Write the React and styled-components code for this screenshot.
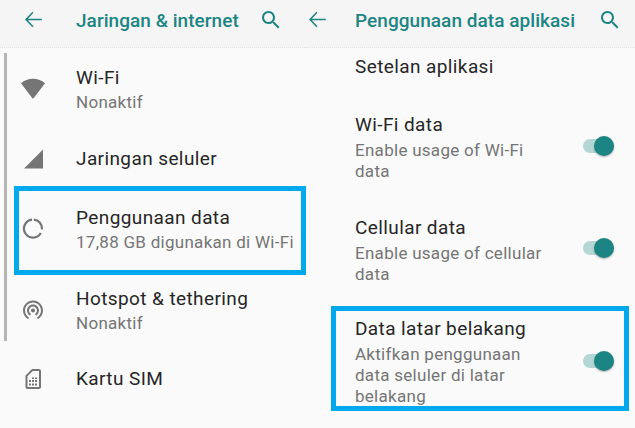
import React from "react";
import styled, { createGlobalStyle } from "styled-components";

const TEAL = "#1c8583";
const GREY = "#757575";

const GlobalStyle = createGlobalStyle`
  html, body {
    margin: 0;
    padding: 0;
    background: #fafafa;
  }
  * {
    box-sizing: border-box;
  }
`;

const ArrowIcon = () => (
  <TealIcon width="25" height="25" viewBox="0 0 24 24">
    <path d="M20 11.3H6.6l5.4-5.8-1-1L3.8 12l7.2 7.5 1-1-5.4-5.8H20z" />
  </TealIcon>
);

const SearchIcon = () => (
  <TealIcon width="24" height="24" viewBox="0 0 24 24">
    <path d="M15.5 14h-.79l-.28-.27C15.41 12.59 16 11.11 16 9.5 16 5.91 13.09 3 9.5 3S3 5.91 3 9.5 5.91 16 9.5 16c1.61 0 3.09-.59 4.23-1.57l.27.28v.79l5 4.99L20.49 19l-4.99-5zm-6 0C7.01 14 5 11.99 5 9.5S7.01 5 9.5 5 14 7.01 14 9.5 11.99 14 9.5 14z" />
  </TealIcon>
);

const WifiIcon = () => (
  <GreyIcon width="26" height="26" viewBox="0 0 26 26">
    <path d="M1 6.200C4.200 3.400 8.400 1.700 13 1.700s8.800 1.700 12 4.500L13.800 21a1 1 0 0 1-1.600 0z" />
  </GreyIcon>
);

const CellIcon = () => (
  <GreyIcon width="26" height="26" viewBox="-1 0 26 26">
    <path d="M3 22.500 22 3.500v19z" />
  </GreyIcon>
);

const DataUsageIcon = () => (
  <GreyIcon width="26" height="26" viewBox="0 1.500 26 26">
    <path
      d="M13.800 4.100a9 9 0 0 1 8.200 9.800M20.800 17.500A9 9 0 1 1 12 4.100"
      fill="none"
      stroke={GREY}
      strokeWidth="2.200"
    />
  </GreyIcon>
);

const HotspotIcon = () => (
  <GreyIcon width="24" height="24" viewBox="0 1.500 24 24">
    <path d="M12 11c-1.100 0-2 .9-2 2s.9 2 2 2 2-.9 2-2-.9-2-2-2zm6 2c0-3.310-2.690-6-6-6s-6 2.690-6 6c0 2.220 1.210 4.150 3 5.190l1-1.740c-1.190-.7-2-1.970-2-3.450 0-2.210 1.790-4 4-4s4 1.790 4 4c0 1.480-.81 2.750-2 3.450l1 1.740c1.790-1.040 3-2.970 3-5.190zM12 3C6.480 3 2 7.480 2 13c0 3.700 2.010 6.920 4.990 8.650l1-1.730C5.610 18.530 4 15.960 4 13c0-4.420 3.580-8 8-8s8 3.580 8 8c0 2.960-1.610 5.530-4 6.920l1 1.730c2.990-1.730 5-4.950 5-8.650 0-5.520-4.480-10-10-10z" />
  </GreyIcon>
);

const SimIcon = () => (
  <GreyIcon width="24" height="24" viewBox="0 0 24 24">
    <path d="M18 2h-7L4.500 8.500V20c0 1.100.9 2 2 2H18c1.100 0 2-.9 2-2V4c0-1.100-.9-2-2-2zm0 18H6.500V9.300L11.800 4H18zM8 13h2v2H8zm3 0h2v2h-2zm3 0h2v2h-2zM8 16.500h2v2H8zm3 0h2v2h-2zm3 0h2v2h-2zM11 10.500h2V12h-2zm3 0h2V12h-2z" />
  </GreyIcon>
);

const networkRows = [
  { title: "Wi-Fi", sub: "Nonaktif", height: 75, icon: <WifiIcon /> },
  { title: "Jaringan seluler", height: 54, gap: 5, icon: <CellIcon /> },
  {
    title: "Penggunaan data",
    sub: "17,88 GB digunakan di Wi-Fi",
    height: 89,
    lift: 2,
    marked: true,
    icon: <DataUsageIcon />,
  },
  { title: "Hotspot & tethering", sub: "Nonaktif", height: 71, icon: <HotspotIcon /> },
  { title: "Kartu SIM", height: 66, icon: <SimIcon /> },
];

const appRows = [
  { title: "Wi-Fi data", lines: ["Enable usage of Wi-Fi", "data"], height: 99, textTop: 12 },
  { title: "Cellular data", lines: ["Enable usage of cellular", "data"], height: 106, textTop: 16 },
  {
    title: "Data latar belakang",
    lines: ["Aktifkan penggunaan", "data seluler di latar", "belakang"],
    height: 105,
    gap: 5,
    textTop: 6,
    toggleDrop: 5,
    marked: true,
  },
];

export default function App() {
  return (
    <>
      <GlobalStyle />
      <Page>
        <LeftPane>
          <Header $left={21} $right={22}>
            <ArrowIcon />
            <HeaderTitle $left={30}>Jaringan &amp; internet</HeaderTitle>
            <SearchIcon />
          </Header>
          <Scrollbar />
          <NetworkList>
            {networkRows.map((row) => (
              <NetworkRow
                key={row.title}
                $height={row.height}
                $gap={row.gap}
                $lift={row.lift}
                $marked={row.marked}
              >
                <IconCell>{row.icon}</IconCell>
                <div>
                  <Title>{row.title}</Title>
                  {row.sub && <NetworkSub>{row.sub}</NetworkSub>}
                </div>
              </NetworkRow>
            ))}
          </NetworkList>
        </LeftPane>
        <RightPane>
          <Header $left={0} $right={13}>
            <ArrowIcon />
            <HeaderTitle $left={25}>Penggunaan data aplikasi</HeaderTitle>
            <SearchIcon />
          </Header>
          <SectionTitle>Setelan aplikasi</SectionTitle>
          {appRows.map((row) => (
            <AppRow
              key={row.title}
              $height={row.height}
              $gap={row.gap}
              $marked={row.marked}
            >
              <AppText $top={row.textTop}>
                <Title>{row.title}</Title>
                {row.lines.map((line, i) => (
                  <Sub key={line} $first={i === 0}>
                    {line}
                  </Sub>
                ))}
              </AppText>
              <Toggle $drop={row.toggleDrop} />
            </AppRow>
          ))}
        </RightPane>
      </Page>
    </>
  );
}

const Page = styled.div`
  display: flex;
  width: 635px;
  height: 428px;
  overflow: hidden;
  background: #fafafa;
  font-family: Roboto, "Liberation Sans", sans-serif;
`;

const LeftPane = styled.div`
  position: relative;
  width: 305px;
  flex: none;
`;

const RightPane = styled.div`
  flex: 1;
  min-width: 0;
`;

const Header = styled.div`
  display: flex;
  align-items: center;
  height: 48px;
  padding: 0 ${(p) => p.$right}px 8px ${(p) => p.$left}px;
  background: #f5f5f5;
  border-bottom: 1px dotted #e4e4e4;
`;

const HeaderTitle = styled.div`
  flex: 1;
  margin-left: ${(p) => p.$left}px;
  padding-top: 2px;
  color: ${TEAL};
  font-size: 19px;
  font-weight: 500;
  letter-spacing: 0.05px;
  white-space: nowrap;
`;

const TealIcon = styled.svg`
  flex: none;
  fill: ${TEAL};
`;

const GreyIcon = styled.svg`
  flex: none;
  fill: ${GREY};
`;

const Scrollbar = styled.div`
  position: absolute;
  left: 4px;
  top: 53px;
  width: 3px;
  height: 288px;
  background: #b5b5b5;
`;

const NetworkList = styled.div`
  padding-top: 4px;
`;

const NetworkRow = styled.div`
  display: flex;
  align-items: center;
  width: 292px;
  height: ${(p) => p.$height}px;
  margin: ${(p) => p.$gap || 0}px 0 0 14px;
  padding-bottom: ${(p) => p.$lift || 0}px;
  border: 5px solid ${(p) => (p.$marked ? "#00a8ec" : "transparent")};
`;

const IconCell = styled.div`
  display: flex;
  justify-content: center;
  width: 57px;
  padding-right: 29px;
  flex: none;
`;

const Title = styled.div`
  color: #262626;
  font-size: 19px;
  letter-spacing: 0.4px;
  line-height: 24px;
  white-space: nowrap;
`;

const Sub = styled.div`
  color: ${GREY};
  font-size: 17px;
  letter-spacing: 0.28px;
  line-height: 21px;
  margin-top: ${(p) => (p.$first ? 3 : 0)}px;
  white-space: nowrap;
`;

const NetworkSub = styled(Sub)`
  margin-top: 2px;
`;

const SectionTitle = styled.div`
  height: 48px;
  padding: 7px 0 0 50px;
  color: #262626;
  font-size: 19px;
  letter-spacing: 0.4px;
  line-height: 24px;
`;

const AppRow = styled.div`
  display: flex;
  align-items: flex-start;
  width: 298px;
  height: ${(p) => p.$height}px;
  margin: ${(p) => p.$gap || 0}px 0 0 26px;
  padding-left: 19px;
  border: 5px solid ${(p) => (p.$marked ? "#00a8ec" : "transparent")};
`;

const AppText = styled.div`
  width: 200px;
  flex: none;
  margin-top: ${(p) => p.$top}px;
`;

const Toggle = styled.div`
  position: relative;
  width: 31px;
  height: 14px;
  align-self: center;
  margin-top: ${(p) => p.$drop || 0}px;
  margin-left: 27.5px;
  border-radius: 7px;
  background: #b4d6d5;

  &::after {
    content: "";
    position: absolute;
    right: 0;
    top: -3px;
    width: 20px;
    height: 20px;
    border-radius: 50%;
    background: ${TEAL};
    box-shadow: 0 1px 2px rgba(0, 0, 0, 0.3);
  }
`;
